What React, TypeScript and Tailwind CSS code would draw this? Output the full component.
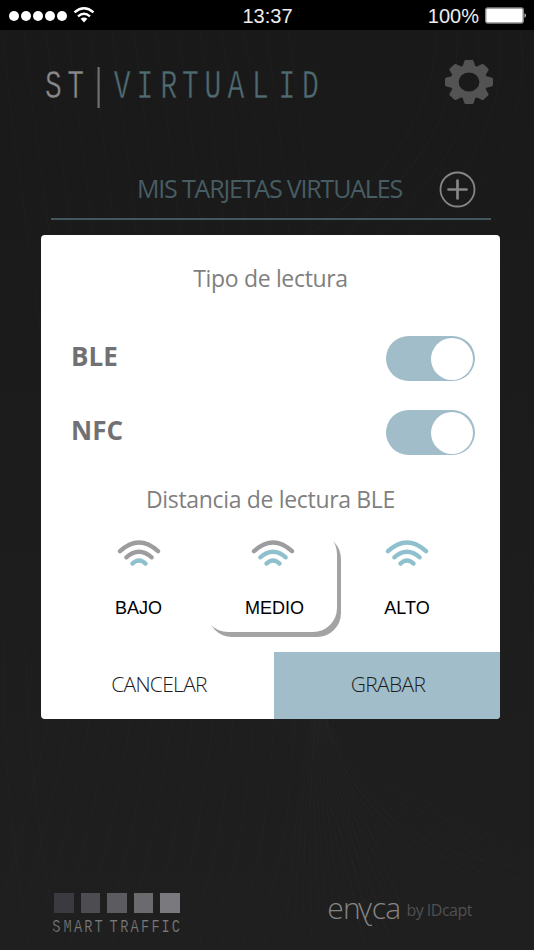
const GREY = "#9d9d9f";
const BLUE = "#8fc0cd";

const distances = [
  { label: "BAJO", level: 1 },
  { label: "MEDIO", level: 2 },
  { label: "ALTO", level: 3 },
];

const squares = ["bg-[#3a3a40]", "bg-[#4d4d51]", "bg-[#5c5c60]", "bg-[#6b6b6f]", "bg-[#7a7a7e]"];

function BackgroundLines() {
  const left = Array.from({ length: 14 }, (_, i) => i);
  const fan = Array.from({ length: 16 }, (_, i) => i);
  return (
    <svg
      className="absolute inset-0 pointer-events-none"
      width="534"
      height="950"
      viewBox="0 0 534 950"
      fill="none"
      stroke="#ffffff"
      strokeOpacity="0.016"
    >
      {/* Long waves on the left */}
      {left.map((i) => (
        <path
          key={i}
          d={`M${2 + i * 22} 30 C${30 + i * 23} 300 ${90 + i * 18} 560 ${40 + i * 21} 760 S${i * 20} 900 ${i * 22 - 20} 950`}
        />
      ))}
      <path d="M4 640 Q0 780 30 950 M26 640 Q26 780 60 950" />
      {/* Arcs in the top right corner */}
      {[0, 1, 2, 3, 4].map((i) => (
        <path
          key={i}
          strokeWidth="1.5"
          d={`M${436 + i * 21} 30 C${438 + i * 24} 110 ${390 + i * 26} 175 ${310 + i * 34} 235`}
        />
      ))}
      {/* Fan below the dialog */}
      {fan.map((i) => (
        <path key={i} d={`M${266 + i * 4} 719 Q${330 + i} 770 ${365 + i * 12} ${950 - i * 6}`} />
      ))}
      {fan.map((i) => (
        <path key={i} d={`M${312 + i} 719 Q${295 + i * 4} 800 ${285 + i * 9} 950`} />
      ))}
      <path d="M332 719 C350 810 430 860 534 868 M326 719 C350 820 440 870 534 882" />
    </svg>
  );
}

function StatusBar() {
  return (
    <div className="relative grid h-[30px] grid-cols-3 items-center bg-black pl-[9px] pr-[7px] text-xl leading-[30px] text-[#ededed]">
      <div className="flex items-center gap-[2px]">
        {[0, 1, 2, 3, 4].map((dot) => (
          <span key={dot} className="size-[10px] rounded-full bg-white" />
        ))}
        <svg className="-mt-0.5 ml-1" width="22" height="18" viewBox="0 0 22 18" fill="none" stroke="#ffffff" strokeWidth="2.4">
          <path d="M1.5 6.3Q11 -1.8 20.5 6.3" />
          <path d="M5 10.3Q11 5 17 10.3" />
          <path d="M7.6 12.8Q11 10 14.4 12.8L11 16.6Z" fill="#ffffff" stroke="none" />
        </svg>
      </div>
      <span className="pr-px pt-px text-center">13:37</span>
      <div className="flex items-center justify-end gap-[6px]">
        <span className="pt-px">100%</span>
        <svg width="42" height="17" viewBox="0 0 42 17">
          <rect x="0.7" y="1" width="37.5" height="15" rx="2" fill="#ffffff" stroke="#8a8a8a" strokeWidth="1.4" />
          <path d="M39.6 6Q42 8.5 39.6 11Z" fill="#ffffff" />
        </svg>
      </div>
    </div>
  );
}

function Wordmark() {
  return (
    <svg width="280" height="46" viewBox="0 0 280 46" fontFamily="'Liberation Mono', monospace" fontSize="40" textAnchor="middle">
      {/* The dark outline trims the letters down to a lighter weight */}
      <g transform="scale(0.7 1)" stroke="#1a1a1a" strokeWidth="0.5">
        <text x="19.3 51.1" y="33" fill="#8a8a8a">ST</text>
        <text x="117.2 150 184.3 215 247.1 280 315 352.8 386.4" y="33" fill="#4f6b72">VIRTUALID</text>
      </g>
      <rect x="57.5" y="2" width="2.2" height="41" fill="#707070" />
    </svg>
  );
}

function GearIcon() {
  return (
    <svg width="48" height="44" viewBox="-24 -24 48 48" preserveAspectRatio="none" fill="#535353">
      <path
        fillRule="evenodd"
        d="M0 -18.5A18.5 18.5 0 1 1 0 18.5A18.5 18.5 0 1 1 0 -18.5ZM0 -10.4A10.4 10.4 0 1 0 0 10.4A10.4 10.4 0 1 0 0 -10.4Z"
      />
      {[0, 45, 90, 135, 180, 225, 270, 315].map((angle) => (
        <path key={angle} transform={`rotate(${angle})`} d="M-6.5 -16.5L-4.8 -22.5Q-4.4 -24 -3 -24H3Q4.4 -24 4.8 -22.5L6.5 -16.5Z" />
      ))}
    </svg>
  );
}

function SignalIcon({ level }: { level: number }) {
  return (
    <svg width="44" height="28" viewBox="0 0 44 28" fill="none" strokeWidth="4.3" strokeLinecap="round">
      <path d="M3 11.2Q22 -6.2 41 11.2" stroke={level > 2 ? BLUE : GREY} />
      <path d="M9.3 17.3Q22 6 34.7 17.3" stroke={level > 1 ? BLUE : GREY} />
      <path d="M15.4 23.6Q22 17.4 28.6 23.6" stroke={BLUE} />
    </svg>
  );
}

function ToggleRow({ label }: { label: string }) {
  return (
    <div className="flex h-[45px] items-center justify-between">
      <span className="pb-[5px] text-[26px] font-bold leading-8 text-[#717173]">{label}</span>
      <button className="flex h-[45px] w-[89px] items-center justify-end rounded-full bg-[#a0bdc9] pr-[2px]">
        <span className="size-[42px] rounded-full bg-white" />
      </button>
    </div>
  );
}

function ReadingDialog() {
  return (
    <div className="relative ml-[41px] mt-[15px] flex h-[484px] w-[459px] flex-col overflow-hidden rounded-[4px] bg-white font-['Open_Sans',sans-serif]">
      <h2 className="mt-[27px] text-center text-[23px] leading-8 tracking-[-0.33px] text-[#7f7f7f]">
        Tipo de lectura
      </h2>
      <div className="mt-[42px] flex flex-col gap-[29px] pl-[30px] pr-[25px]">
        <ToggleRow label="BLE" />
        <ToggleRow label="NFC" />
      </div>
      <h2 className="mt-[28px] text-center text-[23px] leading-8 tracking-[-0.33px] text-[#7f7f7f]">
        Distancia de lectura BLE
      </h2>
      <div className="mt-[15px] flex pl-[30px] font-['Liberation_Sans',sans-serif]">
        {distances.map(({ label, level }) => (
          <button
            key={label}
            className={
              level === 2
                ? "flex h-[102px] w-[133px] flex-col items-center rounded-3xl pl-[5px] shadow-[4px_5px_0_#a3a3a3]"
                : level === 1
                  ? "flex h-[102px] w-[133px] flex-col items-center pl-[2px]"
                  : "flex h-[102px] w-[133px] flex-col items-center pl-[7px]"
            }
          >
            <span className="mt-[10px] block h-[28px]">
              <SignalIcon level={level} />
            </span>
            <span className={level === 2 ? "mt-[30px] pl-[3px] text-lg leading-5 text-black" : "mt-[30px] text-lg leading-5 text-black"}>
              {label}
            </span>
          </button>
        ))}
      </div>
      <div className="mt-auto flex h-[67px] text-[21px] font-light tracking-[-0.7px] text-[#1d1d1d]">
        <button className="w-[233px] pb-[2px] pl-[3px]">CANCELAR</button>
        <button className="flex-1 bg-[#a0bdc9] pb-[2px] pl-[2px]">GRABAR</button>
      </div>
    </div>
  );
}

function Footer() {
  return (
    <div className="relative mt-[174px] flex items-start justify-between pl-[52px] pr-[62px]">
      <div>
        <div className="flex gap-[7px] pl-[2px]">
          {squares.map((color) => (
            <span key={color} className={`h-[20px] w-[19.5px] ${color}`} />
          ))}
        </div>
        <svg className="mt-[4px]" width="132" height="20" viewBox="0 0 132 20" fontFamily="'Liberation Mono', monospace" fontSize="19" textAnchor="middle" fill="#7a7a7a">
          <text
            transform="scale(0.72 1)"
            x="6 21.8 36.1 50.5 64.9 75.2 85.7 100.4 114.9 129.2 144 157.9 172.2"
            y="15"
            stroke="#1f1f1f"
            strokeWidth="0.25"
          >
            SMART TRAFFIC
          </text>
        </svg>
      </div>
      <div className="-mt-px flex items-start gap-[6px] font-['Open_Sans',sans-serif]">
        <span className="text-[30px] font-light leading-8 tracking-[-0.8px] text-[#858585]">
          en<span className="-ml-px inline-block -scale-x-100">y</span>ca
        </span>
        <span className="pt-[2px] text-[16px] leading-8 tracking-[-0.5px] text-[#505050]">by IDcapt</span>
      </div>
    </div>
  );
}

export default function App() {
  return (
    <div className="relative h-[950px] w-[534px] overflow-hidden bg-linear-to-b from-[#191919] to-[#1f1f1f] font-['Liberation_Sans',sans-serif]">
      <BackgroundLines />
      <StatusBar />
      <header className="relative flex justify-between pl-[40px] pr-[41px] pt-[30px]">
        <div className="pt-[5px]">
          <Wordmark />
        </div>
        <GearIcon />
      </header>
      <div className="relative ml-[51px] mt-[60px] flex h-[49px] w-[440px] items-start justify-end border-b-2 border-[#42585f] pr-[15px]">
        <h1 className="mr-[37px] mt-px font-['Open_Sans',sans-serif] text-[25px] leading-8 tracking-[-1.17px] text-[#475d63]">
          MIS TARJETAS VIRTUALES
        </h1>
        <svg width="37" height="37" viewBox="0 0 37 37" fill="none" stroke="#868686" strokeLinecap="round">
          <circle cx="18.5" cy="18.5" r="17" strokeWidth="1.8" />
          <path d="M9.5 18.5H27.5M18.5 9.5V27.5" strokeWidth="2.7" />
        </svg>
      </div>
      <ReadingDialog />
      <Footer />
    </div>
  );
}
